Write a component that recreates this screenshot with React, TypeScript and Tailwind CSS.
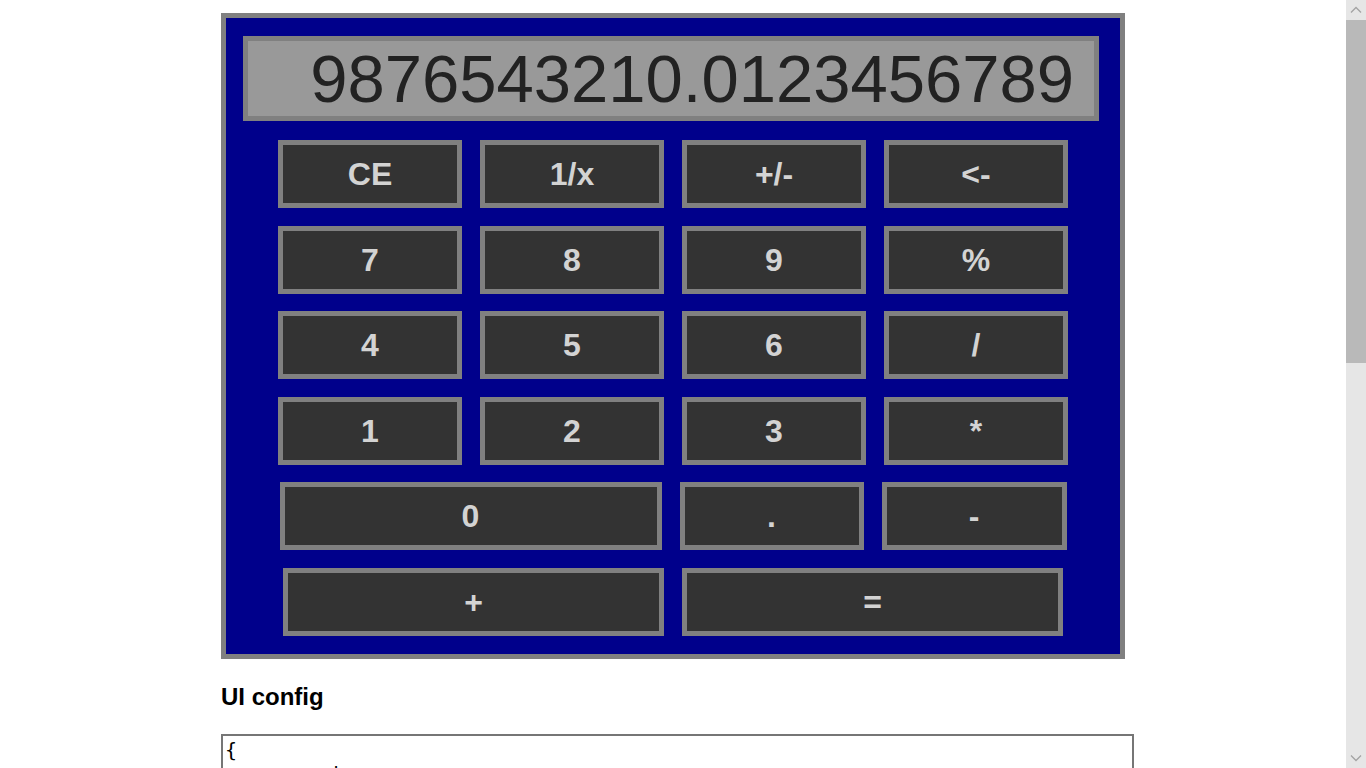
import React from 'react';

type Key = { label: string; w: string };

const rows: Key[][] = [
  [
    { label: 'CE', w: 'w-[184px]' },
    { label: '1/x', w: 'w-[184px]' },
    { label: '+/-', w: 'w-[184px]' },
    { label: '<-', w: 'w-[184px]' },
  ],
  [
    { label: '7', w: 'w-[184px]' },
    { label: '8', w: 'w-[184px]' },
    { label: '9', w: 'w-[184px]' },
    { label: '%', w: 'w-[184px]' },
  ],
  [
    { label: '4', w: 'w-[184px]' },
    { label: '5', w: 'w-[184px]' },
    { label: '6', w: 'w-[184px]' },
    { label: '/', w: 'w-[184px]' },
  ],
  [
    { label: '1', w: 'w-[184px]' },
    { label: '2', w: 'w-[184px]' },
    { label: '3', w: 'w-[184px]' },
    { label: '*', w: 'w-[184px]' },
  ],
  [
    { label: '0', w: 'w-[382px]' },
    { label: '.', w: 'w-[184px]' },
    { label: '-', w: 'w-[185px]' },
  ],
  [
    { label: '+', w: 'w-[381px]' },
    { label: '=', w: 'w-[381px]' },
  ],
];

const config = `{
        shown: yes,
        display: {
                value: "9876543210.0123456789",
                background: "#999999",
                color: "#222222",
                fontSize: 67
        },
        panel: {
                background: "darkblue",
                border: "5px solid gray"
        },
        buttons: {
                background: "#333333",
                color: "lightgray",
                border: "5px solid gray",
                fontWeight: "bold"
        },
        layout: [
                ["CE", "1/x", "+/-", "<-"],
                ["7", "8", "9", "%"],
                ["4", "5", "6", "/"],
                ["1", "2", "3", "*"],
                ["0", ".", "-"],
                ["+", "="]
        ],
        wide: {
                "0": 2,
                "+": 2,
                "=": 2
        },
        precision: 10,
        memory: false,
        history: false,
        theme: "classic"
}`;

// the page scrollbar as it shows in the reference
const ScrollBar = () => (
  <div className="fixed right-0 top-0 h-screen w-[20px] bg-[#e6e6e6] flex flex-col">
    <div className="h-[20px] flex items-center justify-center">
      <svg width="12" height="8" viewBox="0 0 12 8">
        <path d="M1 6.5 L6 1.5 L11 6.5" fill="none" stroke="#a3a3a3" strokeWidth="1.3" />
      </svg>
    </div>
    <div className="h-[343px] bg-[#b9b9b9]" />
    <div className="flex-1" />
    <div className="h-[20px] flex items-center justify-center">
      <svg width="12" height="8" viewBox="0 0 12 8">
        <path d="M1 1.5 L6 6.5 L11 1.5" fill="none" stroke="#a3a3a3" strokeWidth="1.3" />
      </svg>
    </div>
  </div>
);

export default function App() {
  return (
    <div className="min-h-screen bg-white font-['Liberation_Sans',Arial,sans-serif] text-black">
      <div className="ml-[221px] w-[913px] pt-[13px] pb-[30px]">
        <div className="w-[904px] border-[5px] border-[#808080] bg-[#00008b] pt-[18px] pb-[18px]">
          <div className="ml-[17px] w-[856px] h-[85px] border-[5px] border-[#808080] bg-[#999999] flex items-center justify-end pr-[20px] text-[67px] text-[#222222] leading-none">
            9876543210.0123456789
          </div>
          <div className="mt-[19px] flex flex-col gap-[17.6px]">
            {rows.map((row, i) => (
              <div key={i} className="flex justify-center gap-[18px]">
                {row.map(k => (
                  <button
                    key={k.label}
                    className={`${k.w} h-[68px] border-[5px] border-[#808080] bg-[#333333] text-[#d3d3d3] text-[32px] font-bold flex items-center justify-center`}
                  >
                    {k.label}
                  </button>
                ))}
              </div>
            ))}
          </div>
        </div>
        <h2 className="mt-[24px] mb-[23px] text-[24px] leading-[28px] font-bold">UI config</h2>
        <textarea
          readOnly
          defaultValue={config}
          className="block w-[913px] h-[880px] border-2 border-[#767676] p-[2px] font-['DejaVu_Sans_Mono',monospace] text-[20px] leading-[24px] text-black resize-none"
        />
      </div>
      <ScrollBar />
    </div>
  );
}
